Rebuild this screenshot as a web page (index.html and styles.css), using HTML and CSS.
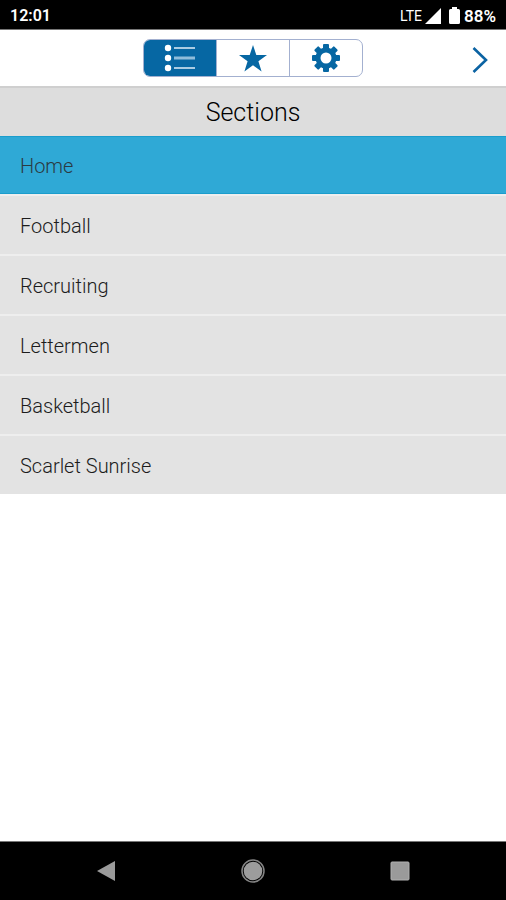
FILE: index.html
```html
<!DOCTYPE html>
<html lang="en">
<head>
  <meta charset="UTF-8">
  <meta name="viewport" content="width=device-width, initial-scale=1.0">
  <title>Sections</title>
  <link rel="stylesheet" href="styles.css">
</head>
<body>
  <div class="status-bar">
    <span class="time">12:01</span>
    <div class="status-icons">
      <span class="network">LTE</span>
      <svg class="signal" width="16" height="16" viewBox="0 0 16 16"><path d="M16 0V16H0Z" fill="#fff"/></svg>
      <svg class="battery" width="11" height="17" viewBox="0 0 11 17"><path d="M3 0h5v2h1.5A1.5 1.5 0 0 1 11 3.500V15.500A1.500 1.500 0 0 1 9.500 17h-8A1.500 1.500 0 0 1 0 15.500V3.500A1.500 1.500 0 0 1 1.500 2H3Z" fill="#fff"/></svg>
      <span class="percent">88%</span>
    </div>
  </div>

  <header class="toolbar">
    <div class="tabs">
      <button class="tab active" aria-label="Sections">
        <svg width="32" height="28" viewBox="0 0 32 28">
          <g fill="#fff"><circle cx="4" cy="4" r="3.200"/><circle cx="4" cy="14" r="3.200"/><circle cx="4" cy="24" r="3.200"/></g>
          <path d="M10 4H31M10 24H31" stroke="#a9cce3" stroke-width="2"/>
          <path d="M10 14H31" stroke="#8fbddb" stroke-width="3"/>
        </svg>
      </button>
      <button class="tab" aria-label="Favorites">
        <svg width="28" height="27" viewBox="0 0 28 27"><path d="M14 0L17.300 10H28L19.400 16.300L22.600 26.500L14 20.300L5.400 26.500L8.600 16.300L0 10H10.700Z" fill="#0667a3"/></svg>
      </button>
      <button class="tab" aria-label="Settings">
        <svg width="28" height="28" viewBox="-14 -14 28 28">
          <g fill="#0667a3">
            <rect x="-3" y="-14" width="6" height="28" rx="1"/>
            <rect x="-3" y="-14" width="6" height="28" rx="1" transform="rotate(45)"/>
            <rect x="-3" y="-14" width="6" height="28" rx="1" transform="rotate(90)"/>
            <rect x="-3" y="-14" width="6" height="28" rx="1" transform="rotate(135)"/>
            <circle r="10.500"/>
          </g>
          <circle r="5.500" fill="#fff"/>
        </svg>
      </button>
    </div>
    <button class="next" aria-label="Next">
      <svg width="16" height="26" viewBox="0 0 16 26"><path d="M1.500 1L14 13L1.500 25" fill="none" stroke="#0b63a3" stroke-width="2.600"/></svg>
    </button>
  </header>

  <main class="content">
    <h1 class="title">Sections</h1>
    <nav class="sections">
      <a class="section active" href="#">Home</a>
      <a class="section" href="#">Football</a>
      <a class="section" href="#">Recruiting</a>
      <a class="section" href="#">Lettermen</a>
      <a class="section" href="#">Basketball</a>
      <a class="section" href="#">Scarlet Sunrise</a>
    </nav>
  </main>

  <footer class="nav-bar">
    <button aria-label="Back">
      <svg width="20" height="22" viewBox="0 0 20 22"><path d="M19 1V21L1 11Z" fill="#9a9a9a"/></svg>
    </button>
    <button aria-label="Home">
      <svg width="24" height="24" viewBox="0 0 24 24"><circle cx="12" cy="12" r="11" fill="none" stroke="#858585" stroke-width="1.500"/><circle cx="12" cy="12" r="9.300" fill="#9c9c9c"/></svg>
    </button>
    <button aria-label="Recents">
      <svg width="20" height="20" viewBox="0 0 20 20"><rect x="1" y="1" width="18" height="18" rx="1" fill="#9a9a9a" stroke="#b0b0b0"/></svg>
    </button>
  </footer>
</body>
</html>
```

FILE: styles.css
```css
* {
  box-sizing: border-box;
}

body {
  margin: 0;
  min-height: 100vh;
  display: flex;
  flex-direction: column;
  font-family: Roboto, sans-serif;
  background-color: #ffffff;
  color: #1c1c1c;
}

button {
  display: flex;
  justify-content: center;
  align-items: center;
  padding: 0;
  border: none;
  background: none;
  cursor: pointer;
}

.status-bar {
  display: flex;
  justify-content: space-between;
  align-items: center;
  height: 30px;
  padding: 2px 10px 0;
  border-bottom: 1px solid #777777;
  background-color: #000000;
  color: #ffffff;
  font-size: 16px;
  font-weight: 600;
}

.status-icons {
  display: flex;
  align-items: center;
}

.percent {
  font-size: 17px;
}

.network {
  font-size: 14px;
  font-weight: 400;
}

.signal {
  margin-left: 3px;
}

.battery {
  margin: 0 4px 0 8px;
}

.toolbar {
  display: grid;
  grid-template-columns: 1fr 220px 1fr;
  align-items: center;
  height: 58px;
  padding: 0 18px;
  border-bottom: 2px solid #cfcfcf;
}

.tabs {
  grid-column: 2;
  display: flex;
  height: 38px;
  border: 1px solid #a3b0d0;
  border-radius: 7px;
  overflow: hidden;
}

.tab {
  flex: 1;
}

.tab + .tab {
  border-left: 1px solid #a3b0d0;
}

.tab.active {
  background-color: #0667a3;
}

.next {
  justify-self: end;
  padding-top: 4px;
}

.content {
  flex: 1;
}

.title {
  margin: 0;
  padding-top: 2px;
  background-color: #dddddd;
  color: #000000;
  font-size: 25px;
  font-weight: 300;
  line-height: 46px;
  text-align: center;
}

.sections {
  display: flex;
  flex-direction: column;
  gap: 2px;
  background-color: #eeeeee;
}

.section {
  padding: 2px 20px 0;
  background-color: #e3e3e3;
  color: inherit;
  font-size: 20px;
  font-weight: 300;
  line-height: 56px;
  text-decoration: none;
}

.section.active {
  background-color: #2fa9d6;
  box-shadow: inset 0 1px #1b9dcc, inset 0 -1px #1b9dcc;
  color: #2b3a42;
}

.nav-bar {
  display: flex;
  align-items: center;
  height: 59px;
  padding: 0 33px;
  border-top: 1px solid #777777;
  background-color: #000000;
}

.nav-bar button {
  flex: 1;
}
```
